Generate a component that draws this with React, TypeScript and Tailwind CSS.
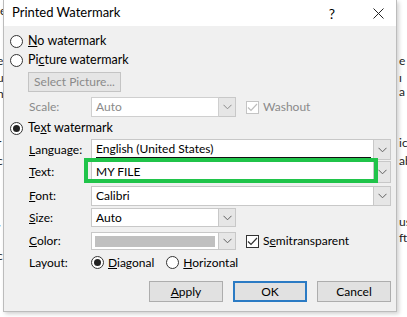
import React from "react";

const font = { fontFamily: 'Lato, "Noto Sans", Arial, sans-serif' };

function Chevron({ color = "#606060" }: { color?: string }) {
  return (
    <svg width="9" height="6" viewBox="0 0 9 6" fill="none">
      <path d="M0.5 0.8 L4.5 4.8 L8.5 0.8" stroke={color} strokeWidth="1" />
    </svg>
  );
}

function Radio({ checked }: { checked?: boolean }) {
  return (
    <span className="relative inline-flex h-[13px] w-[13px] shrink-0 items-center justify-center rounded-full border border-[#333] bg-white">
      {checked && <span className="h-[7px] w-[7px] rounded-full bg-[#222]" />}
    </span>
  );
}

function Check({ disabled }: { disabled?: boolean }) {
  const c = disabled ? "#bdbdbd" : "#333";
  return (
    <span
      className={`inline-flex h-[13px] w-[13px] shrink-0 items-center justify-center border bg-white ${disabled ? "border-[#c4c4c4]" : "border-[#333]"}`}
    >
      <svg width="11" height="9" viewBox="0 0 11 9" fill="none">
        <path d="M1 4.5 L4 7.5 L10 1" stroke={c} strokeWidth="1.2" />
      </svg>
    </span>
  );
}

function Combo({
  wide,
  children,
  disabled,
  underline,
}: {
  wide?: boolean;
  children?: React.ReactNode;
  disabled?: boolean;
  underline?: boolean;
}) {
  return (
    <div className={`flex ${wide ? "w-[300px]" : "w-[145px]"} h-full`}>
      <div
        className={`flex flex-1 items-center border ${disabled ? "border-[#cfcfcf]" : "border-[#c8c8c8]"} bg-white pl-[4px]`}
      >
        {underline ? (
          <div className="mr-[2px] flex h-full flex-1 items-center border-b-[2px] border-[#111]">{children}</div>
        ) : (
          children
        )}
      </div>
      <div className="flex w-[17px] items-center justify-center border border-l-0 border-[#c8c8c8] bg-[#e6e6e6]">
        <Chevron color={disabled ? "#8a8a8a" : "#606060"} />
      </div>
    </div>
  );
}

function Label({ children }: { children: React.ReactNode }) {
  return <div className="w-[62px] shrink-0">{children}</div>;
}

function Btn({ children, primary }: { children: React.ReactNode; primary?: boolean }) {
  return (
    <div
      className={`flex h-[21px] w-[74px] items-center justify-center bg-[#e1e1e1] ${primary ? "border-[2px] border-[#2b7bc4]" : "border border-[#adadad]"}`}
    >
      {children}
    </div>
  );
}

export default function App() {
  const frags: [number, number, string][] = [
    [0, 4, "e"],
    [-3, 54, "e"],
    [-3, 71, "u"],
    [-3, 87, "n"],
    [-3, 136, "r"],
    [-3, 154, "c"],
    [-2, 215, ","],
    [-3, 231, "ı"],
    [-3, 249, "c"],
    [399, 54, "e"],
    [399, 71, "ı a"],
    [399, 136, "ict"],
    [399, 154, "ab"],
    [399, 215, "us"],
    [399, 231, "ft"],
  ];
  return (
    <div className="relative h-[317px] w-[407px] overflow-hidden bg-white text-[12px] text-black" style={font}>
      {frags.map(([x, y, t], i) => (
        <span key={i} className="absolute text-[12px] leading-[14px] text-[#222]" style={{ left: x, top: y }}>
          {t}
        </span>
      ))}
      <div className="absolute left-[3px] top-0 flex h-[312px] w-[394px] flex-col border border-t-0 border-[#bcbcbc] bg-[#f0f0f0] shadow-[2px_2px_4px_rgba(0,0,0,0.18)]">
        <div className="flex h-[26px] shrink-0 items-center bg-white pl-[8px]">
          <span className="text-[13px]">Printed Watermark</span>
          <span className="ml-auto mr-[38px] text-[14px]">?</span>
          <svg className="mr-[12px]" width="11" height="11" viewBox="0 0 11 11">
            <path d="M0.5 0.5 L10.5 10.5 M10.5 0.5 L0.5 10.5" stroke="#222" strokeWidth="1" />
          </svg>
        </div>
        <div className="flex flex-col pl-[6px] pt-[6px]">
          <div className="flex h-[18px] items-center gap-[5px]">
            <Radio />
            <span className="text-[12.5px]">
              <u>N</u>o watermark
            </span>
          </div>
          <div className="mt-[1px] flex h-[18px] items-center gap-[5px]">
            <Radio />
            <span className="text-[12.5px]">
              Pi<u>c</u>ture watermark
            </span>
          </div>
          <div className="ml-[18px] mt-[3px] flex h-[20px] w-[93px] items-center justify-center border border-[#c4c4c4] bg-[#e5e5e5] text-[#8a8a8a]">
            Select Picture...
          </div>
          <div className="mt-[5px] flex h-[20px] items-center pl-[19px] text-[#8a8a8a]">
            <Label>Scale:</Label>
            <Combo disabled>
              <span className="text-[#8a8a8a]">Auto</span>
            </Combo>
            <div className="ml-[10px] flex items-center gap-[4px]">
              <Check disabled />
              <span>Washout</span>
            </div>
          </div>
          <div className="mt-[2px] flex h-[18px] items-center gap-[5px]">
            <Radio checked />
            <span className="text-[12.5px]">
              Te<u>x</u>t watermark
            </span>
          </div>
          <div className="mt-[2px] flex h-[21px] items-center pl-[19px]">
            <Label>
              <u>L</u>anguage:
            </Label>
            <Combo wide underline>
              English (United States)
            </Combo>
          </div>
          <div className="mt-[1px] flex h-[22px] items-center pl-[19px]">
            <Label>
              <u>T</u>ext:
            </Label>
            <div className="relative h-full">
              <Combo wide>MY FILE</Combo>
              <div className="pointer-events-none absolute left-[-7px] top-[-3px] h-[25px] w-[294px] border-[4px] border-[#20c44a]" />
            </div>
          </div>
          <div className="mt-[3px] flex h-[20px] items-center pl-[19px]">
            <Label>
              <u>F</u>ont:
            </Label>
            <Combo wide>Calibri</Combo>
          </div>
          <div className="mt-[2px] flex h-[19px] items-center pl-[19px]">
            <Label>
              <u>S</u>ize:
            </Label>
            <Combo>Auto</Combo>
          </div>
          <div className="mt-[5px] flex h-[18px] items-center pl-[19px]">
            <Label>
              <u>C</u>olor:
            </Label>
            <div className="flex h-full w-[145px]">
              <div className="flex flex-1 items-center border border-[#c8c8c8] bg-white px-[3px]">
                <div className="h-[11px] w-full bg-[#c0c0c0]" />
              </div>
              <div className="flex w-[17px] items-center justify-center border border-l-0 border-[#c8c8c8] bg-[#e6e6e6]">
                <Chevron />
              </div>
            </div>
            <div className="ml-[10px] flex items-center gap-[4px]">
              <Check />
              <span>
                S<u>e</u>mitransparent
              </span>
            </div>
          </div>
          <div className="mt-[4px] flex h-[17px] items-center pl-[19px]">
            <Label>Layout:</Label>
            <div className="flex items-center gap-[4px]">
              <Radio checked />
              <span>
                <u>D</u>iagonal
              </span>
            </div>
            <div className="ml-[12px] flex items-center gap-[4px]">
              <Radio />
              <span>
                <u>H</u>orizontal
              </span>
            </div>
          </div>
          <div className="mt-[10px] flex h-[21px] items-center gap-[10px] pl-[139px]">
            <Btn>
              <u>A</u>pply
            </Btn>
            <Btn primary>OK</Btn>
            <Btn>Cancel</Btn>
          </div>
        </div>
      </div>
    </div>
  );
}
